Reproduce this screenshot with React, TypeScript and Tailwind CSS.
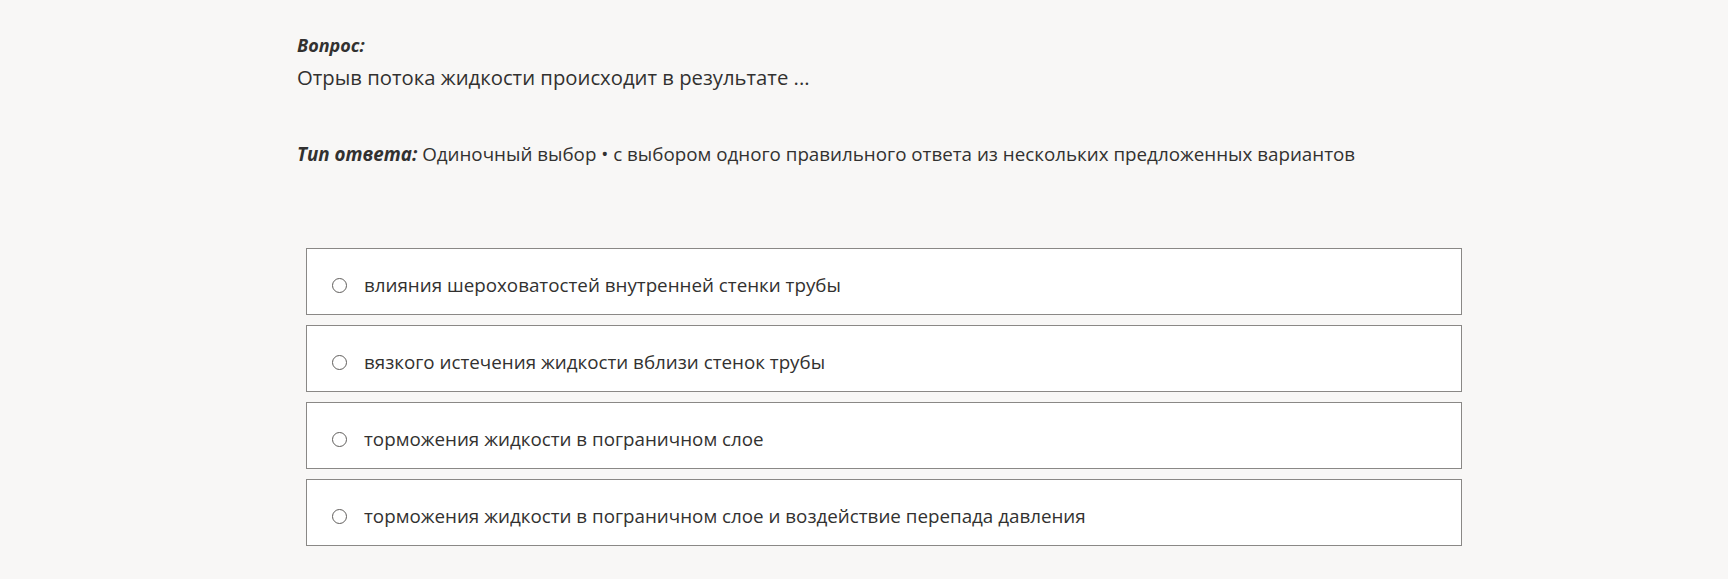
import React from "react";

const options = [
  "влияния шероховатостей внутренней стенки трубы",
  "вязкого истечения жидкости вблизи стенок трубы",
  "торможения жидкости в пограничном слое",
  "торможения жидкости в пограничном слое и воздействие перепада давления",
];

export default function App() {
  return (
    <div
      className="min-h-[579px] w-full bg-[#f8f7f6] text-[#323130]"
      style={{ fontFamily: '"Open Sans", "Noto Sans", sans-serif' }}
    >
      <div className="pl-[297px] pr-[266px] pt-[33px]">
        <div className="text-[18px] font-bold italic leading-[25px]">Вопрос:</div>
        <div className="mt-[5px] text-[20.3px] leading-[28px]">
          Отрыв потока жидкости происходит в результате ...
        </div>
        <div className="mt-[50px] text-[18.8px] leading-[26px]">
          <span className="font-bold italic">Тип ответа:</span> Одиночный выбор • с выбором одного правильного ответа из нескольких предложенных вариантов
        </div>
        <div className="mt-[81px] ml-[9px] flex flex-col gap-[10px]">
          {options.map((o) => (
            <div
              key={o}
              className="flex h-[67px] items-center border border-[#8a8886] bg-white pl-[25px] pt-[7px]"
            >
              <span className="h-[15px] w-[15px] rounded-full border border-[#605e5c] bg-white" />
              <span className="ml-[17px] text-[18.8px]">{o}</span>
            </div>
          ))}
        </div>
      </div>
    </div>
  );
}
